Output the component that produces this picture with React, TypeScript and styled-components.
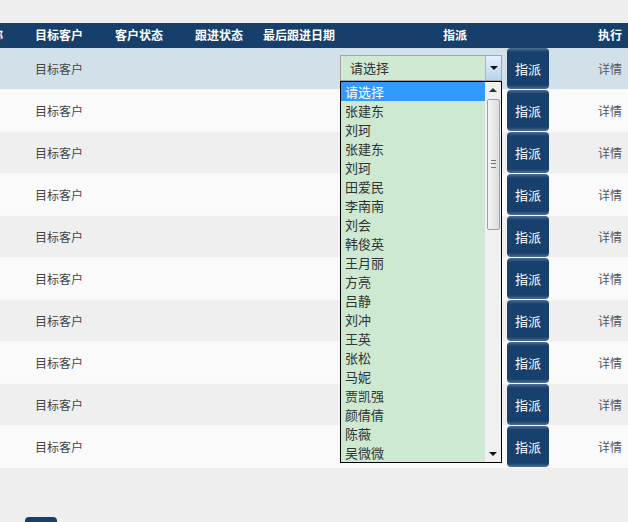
import React from "react";
import styled, { createGlobalStyle } from "styled-components";

const GlobalStyle = createGlobalStyle`
  html, body {
    margin: 0;
    padding: 0;
    background: #eeeeee;
  }
  body {
    font-family: "Noto Sans CJK SC", "Microsoft YaHei", sans-serif;
  }
`;

const COLUMNS = "80px 80px 80px 80px 80px 232px 78px";

const Page = styled.div`
  width: 628px;
  height: 522px;
  padding-top: 23px;
  box-sizing: border-box;
  overflow: hidden;
`;

const Table = styled.div`
  width: 710px;
  margin-left: -61px;
`;

const HeaderRow = styled.div`
  display: grid;
  grid-template-columns: ${COLUMNS};
  height: 25px;
  background: #163f6b;
  color: #ffffff;
  font-size: 12px;
  font-weight: bold;
`;

const HeaderCell = styled.div`
  display: flex;
  align-items: center;
  justify-content: center;
  padding-bottom: 2px;
`;

const Row = styled.div<{ $bg: string }>`
  display: grid;
  grid-template-columns: ${COLUMNS};
  height: 41px;
  border-bottom: 1px solid #f8f8f8;
  background: ${(p) => p.$bg};
  color: #444444;
  font-size: 12px;
`;

const Cell = styled.div`
  display: flex;
  align-items: center;
  justify-content: center;
`;

const AssignCell = styled.div`
  display: flex;
  align-items: center;
  gap: 5px;
  padding-left: 1px;
`;

const SelectBox = styled.div`
  position: relative;
  width: 162px;
  height: 26px;
  margin-top: -2px;
  box-sizing: border-box;
  border: 1px solid #a4a4a4;
  background: #cfe9d2;
  display: flex;
  align-items: center;
  font-size: 13px;
  color: #333333;
  padding-left: 9px;
`;

const SelectSpacer = styled.div`
  width: 162px;
  height: 26px;
`;

const SelectArrow = styled.div`
  margin-left: auto;
  width: 16px;
  height: 24px;
  box-sizing: border-box;
  border-left: 1px solid #9fb7cf;
  background: linear-gradient(#e6f0fa, #b9d4ef);
  display: flex;
  align-items: center;
  justify-content: center;
`;

const Caret = styled.span<{ $up?: boolean }>`
  width: 0;
  height: 0;
  border-left: 4px solid transparent;
  border-right: 4px solid transparent;
  ${(p) =>
    p.$up ? "border-bottom: 4px solid #333;" : "border-top: 4px solid #111;"}
`;

const Dropdown = styled.div`
  position: absolute;
  top: 25px;
  left: -1px;
  width: 162px;
  box-sizing: border-box;
  border: 1px solid #000000;
  background: #cde9d1;
  display: flex;
  z-index: 10;
`;

const Options = styled.div`
  flex: 1;
`;

const Option = styled.div<{ $active?: boolean }>`
  height: 19px;
  line-height: 19px;
  padding-left: 4px;
  font-size: 13px;
  color: ${(p) => (p.$active ? "#ffffff" : "#333333")};
  background: ${(p) => (p.$active ? "#3399ff" : "transparent")};
`;

const ScrollBar = styled.div`
  width: 16px;
  background: #f0f0f0;
  display: flex;
  flex-direction: column;
`;

const ScrollButton = styled.div`
  height: 16px;
  display: flex;
  align-items: center;
  justify-content: center;
`;

const Thumb = styled.div`
  margin: 1px 1px 0 2px;
  height: 131px;
  box-sizing: border-box;
  border: 1px solid #a0a0a0;
  border-radius: 2px;
  background: linear-gradient(90deg, #f4f4f4, #dcdcdc);
  display: flex;
  align-items: center;
  justify-content: center;
`;

const Grip = styled.div`
  width: 5px;
  height: 6px;
  border-top: 1px solid #777;
  border-bottom: 1px solid #777;
  position: relative;
  &::after {
    content: "";
    position: absolute;
    left: 0;
    right: 0;
    top: 2px;
    border-top: 1px solid #777;
  }
`;

const Track = styled.div`
  flex: 1;
`;

const AssignButton = styled.button`
  width: 42px;
  height: 41px;
  border: none;
  border-radius: 4px;
  padding: 0;
  background: linear-gradient(
    #4d6e92 0,
    #17406d 4px,
    #17406d calc(100% - 4px),
    #4d6e92 100%
  );
  color: #ffffff;
  font-family: inherit;
  font-size: 13px;
`;

const Detail = styled.span`
  color: #555555;
`;

const Pager = styled.div`
  display: flex;
  align-items: flex-end;
  margin-top: 49px;
`;

const PagerInput = styled.div`
  width: 25px;
  height: 2px;
  margin-top: 3px;
  border-top: 1px solid #c8c8c8;
`;

const PageButton = styled.div`
  width: 32px;
  height: 20px;
  border-radius: 4px 4px 0 0;
  background: #17406d;
`;

const names = [
  "请选择",
  "张建东",
  "刘珂",
  "张建东",
  "刘珂",
  "田爱民",
  "李南南",
  "刘会",
  "韩俊英",
  "王月丽",
  "方亮",
  "吕静",
  "刘冲",
  "王英",
  "张松",
  "马妮",
  "贾凯强",
  "颜倩倩",
  "陈薇",
  "吴微微",
];

const headers = [
  "客户名称",
  "目标客户",
  "客户状态",
  "跟进状态",
  "最后跟进日期",
  "指派",
  "执行",
];

function App() {
  const rows = Array.from({ length: 10 }, (_, i) => i);
  return (
    <Page>
      <GlobalStyle />
      <Table>
        <HeaderRow>
          {headers.map((h) => (
            <HeaderCell key={h}>{h}</HeaderCell>
          ))}
        </HeaderRow>
        {rows.map((i) => (
          <Row key={i} $bg={i === 0 ? "#d2e0e9" : i % 2 ? "#fafafa" : "#efefef"}>
            <Cell />
            <Cell>目标客户</Cell>
            <Cell />
            <Cell />
            <Cell />
            <AssignCell>
              {i === 0 ? (
                <SelectBox>
                  请选择
                  <SelectArrow>
                    <Caret />
                  </SelectArrow>
                  <Dropdown>
                    <Options>
                      {names.map((n, k) => (
                        <Option key={k} $active={k === 0}>
                          {n}
                        </Option>
                      ))}
                    </Options>
                    <ScrollBar>
                      <ScrollButton>
                        <Caret $up />
                      </ScrollButton>
                      <Thumb>
                        <Grip />
                      </Thumb>
                      <Track />
                      <ScrollButton>
                        <Caret />
                      </ScrollButton>
                    </ScrollBar>
                  </Dropdown>
                </SelectBox>
              ) : (
                <SelectSpacer />
              )}
              <AssignButton>指派</AssignButton>
            </AssignCell>
            <Cell>
              <Detail>详情</Detail>
            </Cell>
          </Row>
        ))}
      </Table>
      <Pager>
        <PagerInput />
        <PageButton />
      </Pager>
    </Page>
  );
}

export default App;
